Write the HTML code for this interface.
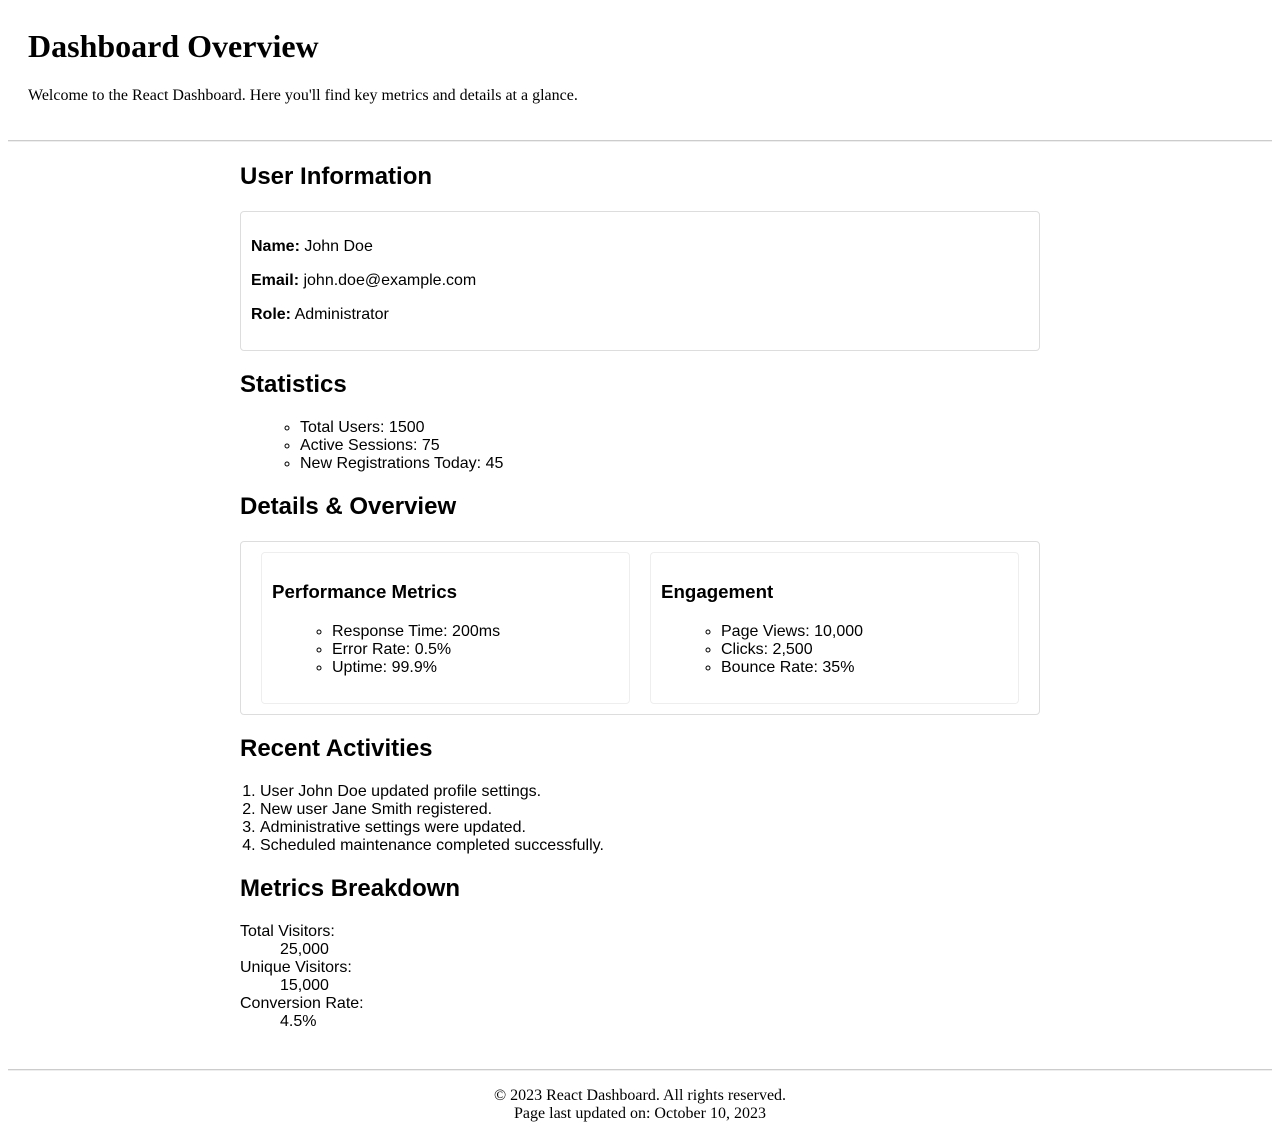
<!DOCTYPE html>
<html><head><meta charset="utf-8"><style>
body{margin:8px;font-family:"Liberation Serif",serif;font-size:16px;color:#000;background:#fff}
header{padding:20px 20px 20px}
h1{margin:0 0 22px;font-size:32px}
header p{margin:0 0 15px}
hr{margin:0;border:0;border-top:1px solid #ccc;border-bottom:1px solid #eee;height:0}
main{width:800px;margin:0 auto;padding-top:1.2px;font-family:"Liberation Sans",sans-serif}
h2{font-size:1.5em;margin:0.83em 0}
.box{border:1px solid #ddd;border-radius:4px;padding:10px}
.box p{margin:1em 0}
ul{margin:1em 0;padding-left:60px;list-style:circle}
.details{display:flex;gap:20px;padding:10px 20px}
.card{flex:1;border:1px solid #eee;border-radius:4px;padding:10px}
h3{font-size:1.17em;margin:1em 0 calc(1em + 1px)}
ol{margin:1em 0;padding-left:20px}
dl{margin:1em 0}
dd{margin-left:40px}
footer{margin-top:38px}
.ft{text-align:center;padding-top:16px}
</style></head><body>
<header><h1>Dashboard Overview</h1><p>Welcome to the React Dashboard. Here you'll find key metrics and details at a glance.</p></header>
<hr>
<main>
<h2>User Information</h2>
<div class="box">
<p><b>Name:</b> John Doe</p>
<p><b>Email:</b> john.doe@example.com</p>
<p><b>Role:</b> Administrator</p>
</div>
<h2>Statistics</h2>
<ul><li>Total Users: 1500</li><li>Active Sessions: 75</li><li>New Registrations Today: 45</li></ul>
<h2>Details &amp; Overview</h2>
<div class="box details" style="padding:10px 20px">
<div class="card"><h3>Performance Metrics</h3><ul><li>Response Time: 200ms</li><li>Error Rate: 0.5%</li><li>Uptime: 99.9%</li></ul></div>
<div class="card"><h3>Engagement</h3><ul><li>Page Views: 10,000</li><li>Clicks: 2,500</li><li>Bounce Rate: 35%</li></ul></div>
</div>
<h2>Recent Activities</h2>
<ol><li>User John Doe updated profile settings.</li><li>New user Jane Smith registered.</li><li>Administrative settings were updated.</li><li>Scheduled maintenance completed successfully.</li></ol>
<h2>Metrics Breakdown</h2>
<dl><dt>Total Visitors:</dt><dd>25,000</dd><dt>Unique Visitors:</dt><dd>15,000</dd><dt>Conversion Rate:</dt><dd>4.5%</dd></dl>
</main>
<footer><hr><div class="ft">© 2023 React Dashboard. All rights reserved.<br>Page last updated on: October 10, 2023</div></footer>
</body></html>
